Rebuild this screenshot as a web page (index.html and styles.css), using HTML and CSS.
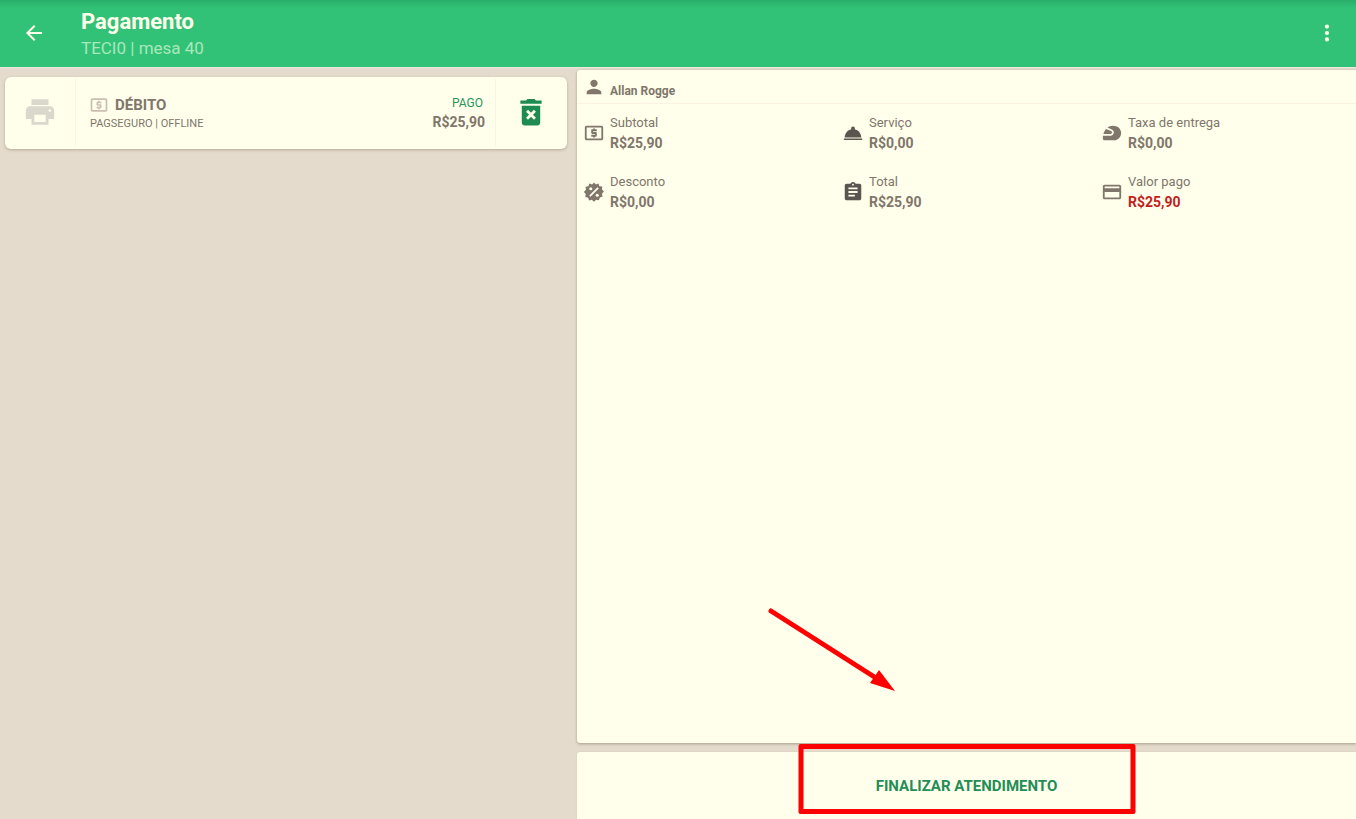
FILE: index.html
```html
<!DOCTYPE html>
<html lang="pt-BR">
<head>
<meta charset="utf-8">
<meta name="viewport" content="width=device-width, initial-scale=1">
<title>Pagamento</title>
<link rel="stylesheet" href="styles.css">
</head>
<body>
<header class="topbar">
  <button class="icon-button" type="button" aria-label="Voltar">
    <svg class="icon icon-bar" viewBox="0 0 24 24"><path d="M20 11H7.83l5.59-5.59L12 4l-8 8 8 8 1.41-1.41L7.83 13H20v-2z"/></svg>
  </button>
  <div class="heading">
    <h1 class="title">Pagamento</h1>
    <p class="subtitle">TECI0 | mesa 40</p>
  </div>
  <button class="icon-button menu-button" type="button" aria-label="Mais opções">
    <svg class="icon icon-bar" viewBox="0 0 24 24"><circle cx="12" cy="5.6" r="2.1"/><circle cx="12" cy="12" r="2.1"/><circle cx="12" cy="18.4" r="2.1"/></svg>
  </button>
</header>
<main class="content">
  <section class="payments">
    <article class="payment">
      <button class="payment-action print" type="button" aria-label="Imprimir">
        <svg class="icon icon-large" viewBox="0 0 24 24"><path d="M19 8H5c-1.66 0-3 1.34-3 3v6h4v4h12v-4h4v-6c0-1.66-1.34-3-3-3zm-3 11H8v-5h8v5zm3-7c-.55 0-1-.45-1-1s.45-1 1-1 1 .45 1 1-.45 1-1 1zm-1-9H6v4h12V3z"/></svg>
      </button>
      <div class="payment-info">
        <div class="method">
          <svg class="icon icon-method" viewBox="0 0 24 24"><path d="M11 17h2v-1h1c.55 0 1-.45 1-1v-3c0-.55-.45-1-1-1h-3v-1h4V8h-2V7h-2v1h-1c-.55 0-1 .45-1 1v3c0 .55.45 1 1 1h3v1H9v2h2v1zm9-13H4c-1.11 0-1.99.89-1.99 2L2 18c0 1.11.89 2 2 2h16c1.11 0 2-.89 2-2V6c0-1.11-.89-2-2-2zm0 14H4V6h16v12z"/></svg>
          <h2 class="method-name">DÉBITO</h2>
        </div>
        <p class="provider">PAGSEGURO | OFFLINE</p>
      </div>
      <div class="payment-value">
        <span class="status">PAGO</span>
        <span class="amount">R$25,90</span>
      </div>
      <button class="payment-action remove" type="button" aria-label="Excluir pagamento">
        <svg class="icon icon-large" viewBox="0 0 24 24"><path d="M5.500 19.500c0 1.100.9 2 2 2h9c1.100 0 2-.9 2-2V7.500h-13v12zM19.500 3.800H15.500l-1-1h-5l-1 1H4.500v2.400h15V3.800z"/><path class="cross" d="M9.2 11.200l5.600 5.600m0-5.600l-5.600 5.600"/></svg>
      </button>
    </article>
  </section>
  <section class="checkout">
    <div class="summary">
      <div class="customer">
        <svg class="icon" viewBox="0 0 24 24"><path d="M12 12c2.21 0 4-1.79 4-4s-1.79-4-4-4-4 1.79-4 4 1.79 4 4 4zm0 2c-2.67 0-8 1.34-8 4v2h16v-2c0-2.66-5.33-4-8-4z"/></svg>
        <span class="customer-name">Allan Rogge</span>
      </div>
      <dl class="totals">
        <div class="total">
          <svg class="icon" viewBox="0 0 24 24"><path d="M11 17h2v-1h1c.55 0 1-.45 1-1v-3c0-.55-.45-1-1-1h-3v-1h4V8h-2V7h-2v1h-1c-.55 0-1 .45-1 1v3c0 .55.45 1 1 1h3v1H9v2h2v1zm9-13H4c-1.11 0-1.99.89-1.99 2L2 18c0 1.11.89 2 2 2h16c1.11 0 2-.89 2-2V6c0-1.11-.89-2-2-2zm0 14H4V6h16v12z"/></svg>
          <dt class="label">Subtotal</dt>
          <dd class="figure">R$25,90</dd>
        </div>
        <div class="total">
          <svg class="icon dark" viewBox="0 0 24 24"><path d="M2 18h20v1.600H2zm11.840-10.210c.1-.24.16-.51.16-.79 0-1.100-.9-2-2-2s-2 .9-2 2c0 .28.06.55.16.79C6.250 8.600 3.200 12.300 2.900 16.800h18.200c-.3-4.500-3.350-8.200-7.260-9.010z"/></svg>
          <dt class="label">Serviço</dt>
          <dd class="figure">R$0,00</dd>
        </div>
        <div class="total">
          <svg class="icon" viewBox="0 0 24 24"><path d="M12 11.39c0-.65-.39-1.23-.98-1.48L5.44 7.55c-1.48 1.68-2.32 3.7-2.8 5.45h7.75c.89 0 1.61-.72 1.61-1.61z"/><path d="M21.96 11.22c-.41-4.41-4.56-7.49-8.98-7.2-2.51.16-4.44.94-5.93 2.04l4.74 2.01c1.33.57 2.2 1.87 2.2 3.32 0 1.99-1.62 3.61-3.61 3.61H2.21C2 16.31 2 17.2 2 17.2v.8c0 1.1.9 2 2 2h10c4.67 0 8.41-4.01 7.96-8.78z"/></svg>
          <dt class="label">Taxa de entrega</dt>
          <dd class="figure">R$0,00</dd>
        </div>
        <div class="total">
          <svg class="icon" viewBox="0 0 24 24"><path d="M12 1.5l2 2.3 2.9-1.2 1 3 3.1.4-.3 3.2 2.2 2.3-2.2 2.5.6 3.1-3 .9-.9 3-3.1-.5L12 22.7l-2.4-2.2-3 .7-1-3-3.1-.8.5-3.2L1 12l2.2-2.5L2.8 6.300l3.100-.7 1-3L10 3.800z"/><path class="percent" d="M7.500 16.500l9-9"/><circle class="hole" cx="8.500" cy="8.500" r="1.700"/><circle class="hole" cx="15.500" cy="15.500" r="1.700"/></svg>
          <dt class="label">Desconto</dt>
          <dd class="figure">R$0,00</dd>
        </div>
        <div class="total">
          <svg class="icon dark" viewBox="0 0 24 24"><path d="M19 3h-4.180C14.400 1.840 13.300 1 12 1c-1.300 0-2.400.84-2.820 2H5c-1.100 0-2 .9-2 2v14c0 1.100.9 2 2 2h14c1.100 0 2-.9 2-2V5c0-1.100-.9-2-2-2zm-7 0c.55 0 1 .45 1 1s-.45 1-1 1-1-.45-1-1 .45-1 1-1zm2 14H7v-2h7v2zm3-4H7v-2h10v2zm0-4H7V7h10v2z"/></svg>
          <dt class="label">Total</dt>
          <dd class="figure">R$25,90</dd>
        </div>
        <div class="total">
          <svg class="icon" viewBox="0 0 24 24"><path d="M20 4H4c-1.110 0-1.990.89-1.990 2L2 18c0 1.110.89 2 2 2h16c1.110 0 2-.89 2-2V6c0-1.110-.89-2-2-2zm0 14H4v-6h16v6zm0-10H4V6h16v2z"/></svg>
          <dt class="label">Valor pago</dt>
          <dd class="figure paid">R$25,90</dd>
        </div>
      </dl>
    </div>
    <footer class="finish">
      <button class="finish-button" type="button">FINALIZAR ATENDIMENTO</button>
    </footer>
    <svg class="pointer" viewBox="0 0 130 86" aria-hidden="true"><path class="pointer-line" d="M4 4l105 67"/><path d="M112 63l16 21-25-8z"/></svg>
    <div class="highlight"></div>
  </section>
</main>
</body>
</html>
```
FILE: styles.css
```css
* {
  box-sizing: border-box;
}

body {
  margin: 0;
  min-height: 100vh;
  display: flex;
  flex-direction: column;
  background: #e4dbcd;
  color: #81766b;
  font-family: Roboto, "Liberation Sans", sans-serif;
}

h1, h2, p, dl, dd {
  margin: 0;
}

button {
  padding: 0;
  border: 0;
  background: none;
  color: inherit;
  font-family: inherit;
}

.icon {
  display: block;
  flex: none;
  width: 22px;
  height: 22px;
  fill: currentColor;
}

.topbar {
  display: flex;
  align-items: center;
  height: 67px;
  padding: 0 17px 1px 22px;
  background: linear-gradient(#2bad69, #31c277 8px);
  color: #ffffec;
  box-shadow: 0 1px 1px #eee8dc;
}

.icon-button {
  display: grid;
  place-items: center;
}

.icon-bar {
  width: 24px;
  height: 24px;
}

.heading {
  flex: 1;
  padding: 4px 0 0 35px;
}

.title {
  font-size: 22px;
  line-height: 26px;
  font-weight: 700;
}

.subtitle {
  font-size: 17px;
  line-height: 26px;
  font-weight: 400;
  color: #a9e8bb;
}

.content {
  flex: 1;
  display: grid;
  grid-template-columns: 577fr 779fr;
}

.payments {
  padding: 10px 10px 10px 5px;
}

.payment {
  display: flex;
  min-height: 72px;
  padding: 2px 0;
  border-radius: 6px;
  background: #ffffec;
  box-shadow: 0 1px 3px #b5a99a;
}

.payment-action {
  width: 71px;
  padding-bottom: 2px;
  display: grid;
  place-items: center;
}

.print {
  border-right: 1px solid #fbf3e3;
  color: #dad7cc;
}

.remove {
  width: 72px;
  border-left: 1px solid #fbf3e3;
  padding-right: 2px;
  color: #1d8b52;
}

.icon-large {
  width: 34px;
  height: 34px;
}

.cross {
  fill: none;
  stroke: #ffffec;
  stroke-width: 2;
}

.payment-info {
  flex: 1;
  padding: 16px 0 0 14px;
}

.method {
  display: flex;
  align-items: center;
  gap: 5px;
}

.icon-method {
  width: 22px;
  height: 20px;
  margin-left: -2px;
  color: #cbbdb0;
}

.method-name {
  font-size: 15px;
  line-height: 20px;
  font-weight: 700;
}

.provider {
  font-size: 11px;
  line-height: 18px;
}

.payment-value {
  display: flex;
  flex-direction: column;
  align-items: flex-end;
  padding: 15px 10px 0 0;
}

.status {
  padding-right: 2px;
  font-size: 12px;
  line-height: 18px;
  color: #27965c;
}

.amount {
  font-size: 14px;
  line-height: 20px;
  font-weight: 700;
}

.checkout {
  position: relative;
  display: flex;
  flex-direction: column;
  gap: 9px;
  padding-top: 3px;
}

.summary {
  flex: 1;
  border-radius: 3px 0 0 3px;
  background: #ffffec;
  box-shadow: 0 1px 3px #a89c8e;
}

.customer {
  display: flex;
  align-items: center;
  gap: 5px;
  height: 34px;
  padding: 0 6px;
  border-bottom: 1px solid #fbf0e2;
}

.customer-name {
  padding-top: 8px;
  font-size: 12px;
  line-height: 18px;
  font-weight: 700;
}

.totals {
  display: grid;
  grid-template-columns: repeat(3, 1fr);
  row-gap: 19px;
  padding: 9px 2px 0 0;
}

.total {
  display: grid;
  grid-template-columns: 22px 1fr;
  grid-template-rows: 20px 20px;
  column-gap: 5px;
  align-items: center;
  padding-left: 6px;
}

.total .icon {
  grid-row: 1 / 3;
}

.dark {
  color: #5a554e;
}

.label {
  font-size: 13px;
  line-height: 20px;
}

.figure {
  font-size: 14px;
  line-height: 18px;
  font-weight: 700;
}

.paid {
  color: #c41d20;
}

.percent {
  fill: none;
  stroke: #ffffec;
  stroke-width: 2;
}

.hole {
  fill: #ffffec;
}

.finish {
  display: flex;
  border-radius: 3px 0 0 0;
  background: #ffffec;
  box-shadow: 0 0 2px #d6c9bb;
}

.finish-button {
  flex: 1;
  height: 67px;
  color: #238d57;
  font-size: 15px;
  font-weight: 700;
}

.highlight {
  position: absolute;
  bottom: 5px;
  left: 50%;
  width: 337px;
  height: 70px;
  transform: translateX(-50%);
  border: 5px solid #ff0000;
  border-radius: 2px;
  pointer-events: none;
}

.pointer {
  position: absolute;
  bottom: 126px;
  right: 459px;
  width: 130px;
  height: 86px;
  fill: #ff0000;
  pointer-events: none;
}

.pointer-line {
  stroke: #ff0000;
  stroke-width: 5;
  stroke-linecap: round;
}
```
